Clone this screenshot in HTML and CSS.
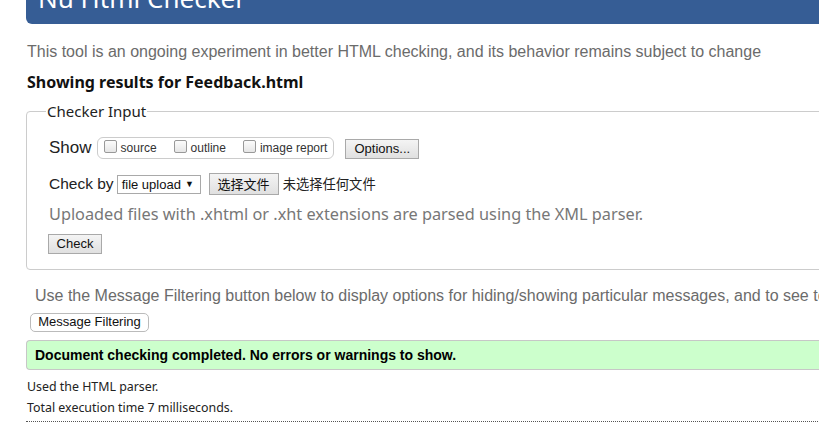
FILE: index.html
```html
<!DOCTYPE html>
<html>
<head>
<meta charset="utf-8">
<link rel="stylesheet" href="styles.css">
</head>
<body>
<div class="page">
  <header class="banner"><h1 class="title">Nu Html Checker</h1></header>
  <p class="intro">This tool is an ongoing experiment in better HTML checking, and its behavior remains subject to change</p>
  <h2 class="results">Showing results for Feedback.html</h2>
  <fieldset class="input">
    <legend class="legend">Checker Input</legend>
    <div class="row show-row">
      <span class="lbl">Show</span>
      <span class="group">
        <label class="opt"><span class="cb"></span>source</label>
        <label class="opt"><span class="cb"></span>outline</label>
        <label class="opt"><span class="cb"></span>image report</label>
      </span>
      <span class="btn options">Options...</span>
    </div>
    <div class="row by-row">
      <span class="lbl lbl-by">Check by</span>
      <span class="select">file upload <span class="arrow">▼</span></span>
      <span class="btn file">选择文件</span>
      <span class="nofile">未选择任何文件</span>
    </div>
    <p class="note">Uploaded files with .xhtml or .xht extensions are parsed using the XML parser.</p>
    <span class="btn check">Check</span>
  </fieldset>
  <p class="filter-note">Use the Message Filtering button below to display options for hiding/showing particular messages, and to see total counts of errors and warnings.</p>
  <div class="filter-row"><span class="btn filter">Message Filtering</span></div>
  <div class="success">Document checking completed. No errors or warnings to show.</div>
  <p class="stat">Used the HTML parser.</p>
  <p class="stat">Total execution time 7 milliseconds.</p>
  <hr class="dots">
</div>
</body>
</html>
```
FILE: styles.css
```css
html, body { margin: 0; padding: 0; overflow: hidden; background: #fff; }
body { font-family: "Noto Sans", "Liberation Sans", sans-serif; color: #222; }
.page { width: 1100px; padding-left: 26px; }
.banner { height: 24px; overflow: hidden; background: #365d95; border-bottom-left-radius: 6px; }
.title { margin: -20px 0 0 12px; font: 400 26px/36px "Noto Sans", sans-serif; color: #fff; }
.intro { margin: 18px 0 0 1px; font: 16px/20px "Liberation Sans", Arial, sans-serif; color: #6b6b6b; }
.results { margin: 9px 0 0 1px; font: 700 16px/22px "Noto Sans", sans-serif; color: #111; }
.input { margin: 8px 0 0 0; padding: 8px 0 15px 22px; border: 1px solid #ccc; border-radius: 4px; }
.legend { padding: 0 1px; margin-left: -3px; font: 15px/20px "Noto Sans", sans-serif; color: #222; }
.row { display: flex; align-items: center; }
.lbl { font: 17px/22px "Liberation Sans", Arial, sans-serif; color: #222; }
.lbl-by { font-size: 15.5px; }
.show-row { height: 22px; margin-top: 8px; }
.group { display: flex; align-items: center; margin-left: 5px; height: 22px; padding: 0 6px 0 6px; border: 1px solid #ccc; border-radius: 6px; box-sizing: border-box; }
.opt { display: flex; align-items: center; font: 12px/14px "Liberation Sans", Arial, sans-serif; color: #333; margin-right: 17px; }
.opt:last-child { margin-right: 0; }
.cb { width: 11px; height: 11px; border: 1px solid #999; border-radius: 2px; background: linear-gradient(#fcfcfc, #e6e6e6); margin: -3px 4px 0 0; }
.btn { display: inline-flex; align-items: center; justify-content: center; box-sizing: border-box; border: 1px solid #a9a9a9; background: linear-gradient(#f4f4f4, #e0e0e0); color: #111; font: 13px/16px "Liberation Sans", Arial, sans-serif; }
.options { margin-left: 11px; width: 74px; height: 20px; margin-top: 2px; }
.by-row { height: 24px; margin-top: 13px; }
.select { margin-left: 3px; width: 84px; height: 19px; box-sizing: border-box; border: 1px solid #a9a9a9; font: 13px/17px "Liberation Sans", Arial, sans-serif; color: #111; padding-left: 4px; display: flex; align-items: center; }
.arrow { font-size: 9px; margin-left: 4px; }
.file { margin-left: 8px; width: 70px; height: 22px; font: 13px/16px "Noto Sans CJK SC", sans-serif; }
.nofile { margin-left: 4px; font: 13.3px/16px "Noto Sans CJK SC", sans-serif; color: #222; }
.note { margin: 7px 0 0 0; font: 16.3px/22px "Noto Sans", sans-serif; color: #777; }
.check { margin-top: 9px; width: 54px; height: 20px; margin-left: -1px; }
.filter-note { margin: 16px 0 0 9px; font: 16px/20px "Liberation Sans", Arial, sans-serif; color: #6b6b6b; white-space: nowrap; }
.filter-row { margin-top: 3px; padding-left: 4px; }
.filter { width: 119px; height: 19px; border-radius: 5px; background: #fff; border-color: #bbb; font-size: 13px; }
.success { margin-top: 8px; height: 28px; display: flex; align-items: center; padding-left: 8px; background: #ccffcc; border-top: 1px solid #c7c7c7; border-bottom: 1px solid #c7c7c7; border-left: 1px solid #c7c7c7; border-radius: 4px 0 0 4px; font: 700 14px/18px "Liberation Sans", Arial, sans-serif; color: #000; }
.stat { margin: 9px 0 0 1px; font: 12.4px/16px "Noto Sans", sans-serif; color: #222; }
.stat + .stat { margin-top: 5px; }
.dots { margin: 5px 0 0 0; border: 0; border-top: 1px dotted #555; height: 0; }
```
